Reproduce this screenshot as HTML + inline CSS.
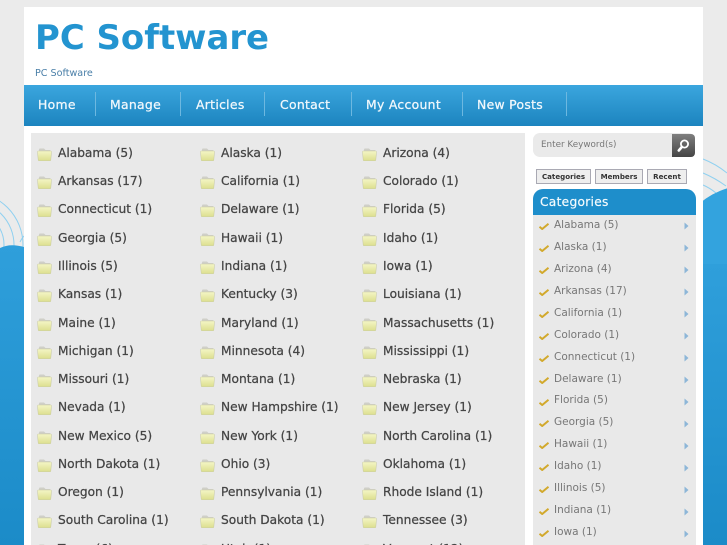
<!DOCTYPE html>
<html><head><meta charset="utf-8"><title>PC Software</title>
<style>
html,body{margin:0;padding:0;width:727px;height:545px;overflow:hidden}
#page{position:relative;width:727px;height:545px;overflow:hidden;background:#ebebeb;font-family:"DejaVu Sans",sans-serif}
.a{position:absolute;white-space:nowrap}
#wrap{left:24px;top:7px;width:679px;height:538px;background:#fff}
#nav{left:24px;top:85px;width:679px;height:41px;background:linear-gradient(#3ba6de,#1c84bf)}
#nav span{position:absolute;top:0;line-height:39px;color:#f2f8fc;font-size:12.4px;letter-spacing:.3px;-webkit-text-stroke:.25px #f2f8fc}
#nav i{position:absolute;top:7px;width:1px;height:24px;background:#6db8e0}
#main{left:31px;top:133px;width:494px;height:412px;background:#e9e9e9}
.st{position:absolute;font-size:12.2px;color:#444;line-height:16px;white-space:nowrap;-webkit-text-stroke:.25px #444}
.f{position:absolute;width:15px;height:13px}
#side{left:533px;top:189px;width:163px;height:356px;background:#e9e9e9;border-radius:10px 10px 0 0}
#sh{left:533px;top:189px;width:163px;height:26px;background:#1e8ecb;border-radius:10px 10px 0 0;color:#f4fafd;font-size:12.2px;line-height:26px;letter-spacing:.3px;text-indent:7px;-webkit-text-stroke:.2px #f4fafd}
.si{position:absolute;left:554px;font-size:10.5px;line-height:14px;color:#777;white-space:nowrap}
.ck,.ar{position:absolute}
.tab{position:absolute;top:169px;height:13px;border:1px solid #a9a9b3;background:#eee;font-size:7.1px;font-weight:bold;color:#333;text-align:center;line-height:13px}
</style></head><body><div id="page">
<svg class="a" style="left:0;top:0" width="727" height="545">
<defs>
<linearGradient id="bl" x1="0" y1="0" x2="0" y2="1"><stop offset="0" stop-color="#2f9fdb"/><stop offset="1" stop-color="#1b8bc8"/></linearGradient>
<linearGradient id="fg" x1="0" y1="0" x2="0" y2="1"><stop offset="0" stop-color="#f4f5c6"/><stop offset="1" stop-color="#dcdf8e"/></linearGradient>
<symbol id="fo" viewBox="0 0 15 13"><path d="M2 4V1.5Q2 .5 3 .5H7L8.5 2H12.5Q13.5 2 13.5 3V4Z" fill="#cfcfc8"/><path d="M0.5 3.8Q0.5 3 1.2 3H13.8Q14.5 3 14.5 3.8L13.8 12Q13.7 12.8 13 12.8H2Q1.3 12.8 1.2 12Z" fill="url(#fg)" stroke="#c8caa0" stroke-width=".5"/></symbol>
<symbol id="ch" viewBox="0 0 10 7"><path d="M.5 3.8L3.2 6L9.5 .8" fill="none" stroke="#d2a92c" stroke-width="2"/></symbol>
</defs>
<g fill="none" stroke="#8fd0f0" stroke-width="1">
<circle cx="-30" cy="245" r="34"/><circle cx="-30" cy="245" r="44"/><circle cx="-30" cy="245" r="53"/>
<path d="M20 242Q22 238 24 236"/>
<path d="M703 159Q716 164 727 173M703 173Q715 178 726 186M703 185Q710 188 716 193"/>
</g>
<path d="M0 248Q10 243 24 247V545H0Z" fill="url(#bl)"/>
<circle cx="750" cy="264" r="79" fill="#33a3de"/>
<rect x="703" y="264" width="24" height="281" fill="url(#bl)"/>
</svg>
<div class="a" id="wrap"></div>
<div class="a" style="left:35px;top:17px;font-size:33.9px;line-height:42px;font-weight:bold;color:#2394d0">PC Software</div>
<div class="a" style="left:35px;top:67px;font-size:9.6px;line-height:14px;color:#4a7fa8">PC Software</div>
<div class="a" id="nav">
<span style="left:14px">Home</span><i style="left:71px"></i>
<span style="left:86px">Manage</span><i style="left:156px"></i>
<span style="left:172px">Articles</span><i style="left:240px"></i>
<span style="left:256px">Contact</span><i style="left:327px"></i>
<span style="left:342px">My Account</span><i style="left:438px"></i>
<span style="left:453px">New Posts</span><i style="left:542px"></i>
</div>
<div class="a" id="main"></div>
<svg class="f" style="left:37px;top:148px"><use href="#fo"/></svg><div class="st" style="left:58px;top:145px">Alabama (5)</div>
<svg class="f" style="left:200px;top:148px"><use href="#fo"/></svg><div class="st" style="left:221px;top:145px">Alaska (1)</div>
<svg class="f" style="left:362px;top:148px"><use href="#fo"/></svg><div class="st" style="left:383px;top:145px">Arizona (4)</div>
<svg class="f" style="left:37px;top:176px"><use href="#fo"/></svg><div class="st" style="left:58px;top:173px">Arkansas (17)</div>
<svg class="f" style="left:200px;top:176px"><use href="#fo"/></svg><div class="st" style="left:221px;top:173px">California (1)</div>
<svg class="f" style="left:362px;top:176px"><use href="#fo"/></svg><div class="st" style="left:383px;top:173px">Colorado (1)</div>
<svg class="f" style="left:37px;top:204px"><use href="#fo"/></svg><div class="st" style="left:58px;top:201px">Connecticut (1)</div>
<svg class="f" style="left:200px;top:204px"><use href="#fo"/></svg><div class="st" style="left:221px;top:201px">Delaware (1)</div>
<svg class="f" style="left:362px;top:204px"><use href="#fo"/></svg><div class="st" style="left:383px;top:201px">Florida (5)</div>
<svg class="f" style="left:37px;top:233px"><use href="#fo"/></svg><div class="st" style="left:58px;top:230px">Georgia (5)</div>
<svg class="f" style="left:200px;top:233px"><use href="#fo"/></svg><div class="st" style="left:221px;top:230px">Hawaii (1)</div>
<svg class="f" style="left:362px;top:233px"><use href="#fo"/></svg><div class="st" style="left:383px;top:230px">Idaho (1)</div>
<svg class="f" style="left:37px;top:261px"><use href="#fo"/></svg><div class="st" style="left:58px;top:258px">Illinois (5)</div>
<svg class="f" style="left:200px;top:261px"><use href="#fo"/></svg><div class="st" style="left:221px;top:258px">Indiana (1)</div>
<svg class="f" style="left:362px;top:261px"><use href="#fo"/></svg><div class="st" style="left:383px;top:258px">Iowa (1)</div>
<svg class="f" style="left:37px;top:289px"><use href="#fo"/></svg><div class="st" style="left:58px;top:286px">Kansas (1)</div>
<svg class="f" style="left:200px;top:289px"><use href="#fo"/></svg><div class="st" style="left:221px;top:286px">Kentucky (3)</div>
<svg class="f" style="left:362px;top:289px"><use href="#fo"/></svg><div class="st" style="left:383px;top:286px">Louisiana (1)</div>
<svg class="f" style="left:37px;top:318px"><use href="#fo"/></svg><div class="st" style="left:58px;top:315px">Maine (1)</div>
<svg class="f" style="left:200px;top:318px"><use href="#fo"/></svg><div class="st" style="left:221px;top:315px">Maryland (1)</div>
<svg class="f" style="left:362px;top:318px"><use href="#fo"/></svg><div class="st" style="left:383px;top:315px">Massachusetts (1)</div>
<svg class="f" style="left:37px;top:346px"><use href="#fo"/></svg><div class="st" style="left:58px;top:343px">Michigan (1)</div>
<svg class="f" style="left:200px;top:346px"><use href="#fo"/></svg><div class="st" style="left:221px;top:343px">Minnesota (4)</div>
<svg class="f" style="left:362px;top:346px"><use href="#fo"/></svg><div class="st" style="left:383px;top:343px">Mississippi (1)</div>
<svg class="f" style="left:37px;top:374px"><use href="#fo"/></svg><div class="st" style="left:58px;top:371px">Missouri (1)</div>
<svg class="f" style="left:200px;top:374px"><use href="#fo"/></svg><div class="st" style="left:221px;top:371px">Montana (1)</div>
<svg class="f" style="left:362px;top:374px"><use href="#fo"/></svg><div class="st" style="left:383px;top:371px">Nebraska (1)</div>
<svg class="f" style="left:37px;top:402px"><use href="#fo"/></svg><div class="st" style="left:58px;top:399px">Nevada (1)</div>
<svg class="f" style="left:200px;top:402px"><use href="#fo"/></svg><div class="st" style="left:221px;top:399px">New Hampshire (1)</div>
<svg class="f" style="left:362px;top:402px"><use href="#fo"/></svg><div class="st" style="left:383px;top:399px">New Jersey (1)</div>
<svg class="f" style="left:37px;top:431px"><use href="#fo"/></svg><div class="st" style="left:58px;top:428px">New Mexico (5)</div>
<svg class="f" style="left:200px;top:431px"><use href="#fo"/></svg><div class="st" style="left:221px;top:428px">New York (1)</div>
<svg class="f" style="left:362px;top:431px"><use href="#fo"/></svg><div class="st" style="left:383px;top:428px">North Carolina (1)</div>
<svg class="f" style="left:37px;top:459px"><use href="#fo"/></svg><div class="st" style="left:58px;top:456px">North Dakota (1)</div>
<svg class="f" style="left:200px;top:459px"><use href="#fo"/></svg><div class="st" style="left:221px;top:456px">Ohio (3)</div>
<svg class="f" style="left:362px;top:459px"><use href="#fo"/></svg><div class="st" style="left:383px;top:456px">Oklahoma (1)</div>
<svg class="f" style="left:37px;top:487px"><use href="#fo"/></svg><div class="st" style="left:58px;top:484px">Oregon (1)</div>
<svg class="f" style="left:200px;top:487px"><use href="#fo"/></svg><div class="st" style="left:221px;top:484px">Pennsylvania (1)</div>
<svg class="f" style="left:362px;top:487px"><use href="#fo"/></svg><div class="st" style="left:383px;top:484px">Rhode Island (1)</div>
<svg class="f" style="left:37px;top:515px"><use href="#fo"/></svg><div class="st" style="left:58px;top:512px">South Carolina (1)</div>
<svg class="f" style="left:200px;top:515px"><use href="#fo"/></svg><div class="st" style="left:221px;top:512px">South Dakota (1)</div>
<svg class="f" style="left:362px;top:515px"><use href="#fo"/></svg><div class="st" style="left:383px;top:512px">Tennessee (3)</div>
<svg class="f" style="left:37px;top:544px"><use href="#fo"/></svg><div class="st" style="left:58px;top:541px">Texas (6)</div>
<svg class="f" style="left:200px;top:544px"><use href="#fo"/></svg><div class="st" style="left:221px;top:541px">Utah (1)</div>
<svg class="f" style="left:362px;top:544px"><use href="#fo"/></svg><div class="st" style="left:383px;top:541px">Vermont (12)</div>

<div class="a" style="left:533px;top:133px;width:162px;height:24px;background:#eaeaea;border-radius:7px"></div>
<div class="a" style="left:541px;top:138px;font-size:8.8px;line-height:14px;color:#777">Enter Keyword(s)</div>
<div class="a" style="left:672px;top:134px;width:23px;height:23px;background:linear-gradient(#7f7f7f,#444);border-radius:0 4px 4px 0"></div>
<svg class="a" style="left:672px;top:134px" width="23" height="23"><circle cx="12.5" cy="10" r="3.6" fill="none" stroke="#fff" stroke-width="1.8"/><path d="M9.8 13L6.8 16.5" stroke="#fff" stroke-width="2.6" stroke-linecap="round"/></svg>
<div class="tab" style="left:536px;width:53px">Categories</div>
<div class="tab" style="left:595px;width:46px">Members</div>
<div class="tab" style="left:647px;width:38px">Recent</div>
<div class="a" id="side"></div>
<div class="a" id="sh">Categories</div>
<svg class="ck" style="left:539px;top:223px" width="10" height="7"><use href="#ch"/></svg><div class="si" style="top:218px">Alabama (5)</div><svg class="ar" style="left:684px;top:222px" width="5" height="8"><path d="M0.5 0.5L4.5 4L0.5 7.5Z" fill="#8db6d8"/></svg>
<svg class="ck" style="left:539px;top:245px" width="10" height="7"><use href="#ch"/></svg><div class="si" style="top:240px">Alaska (1)</div><svg class="ar" style="left:684px;top:244px" width="5" height="8"><path d="M0.5 0.5L4.5 4L0.5 7.5Z" fill="#8db6d8"/></svg>
<svg class="ck" style="left:539px;top:267px" width="10" height="7"><use href="#ch"/></svg><div class="si" style="top:262px">Arizona (4)</div><svg class="ar" style="left:684px;top:266px" width="5" height="8"><path d="M0.5 0.5L4.5 4L0.5 7.5Z" fill="#8db6d8"/></svg>
<svg class="ck" style="left:539px;top:289px" width="10" height="7"><use href="#ch"/></svg><div class="si" style="top:284px">Arkansas (17)</div><svg class="ar" style="left:684px;top:288px" width="5" height="8"><path d="M0.5 0.5L4.5 4L0.5 7.5Z" fill="#8db6d8"/></svg>
<svg class="ck" style="left:539px;top:311px" width="10" height="7"><use href="#ch"/></svg><div class="si" style="top:306px">California (1)</div><svg class="ar" style="left:684px;top:310px" width="5" height="8"><path d="M0.5 0.5L4.5 4L0.5 7.5Z" fill="#8db6d8"/></svg>
<svg class="ck" style="left:539px;top:333px" width="10" height="7"><use href="#ch"/></svg><div class="si" style="top:328px">Colorado (1)</div><svg class="ar" style="left:684px;top:332px" width="5" height="8"><path d="M0.5 0.5L4.5 4L0.5 7.5Z" fill="#8db6d8"/></svg>
<svg class="ck" style="left:539px;top:355px" width="10" height="7"><use href="#ch"/></svg><div class="si" style="top:350px">Connecticut (1)</div><svg class="ar" style="left:684px;top:354px" width="5" height="8"><path d="M0.5 0.5L4.5 4L0.5 7.5Z" fill="#8db6d8"/></svg>
<svg class="ck" style="left:539px;top:377px" width="10" height="7"><use href="#ch"/></svg><div class="si" style="top:372px">Delaware (1)</div><svg class="ar" style="left:684px;top:376px" width="5" height="8"><path d="M0.5 0.5L4.5 4L0.5 7.5Z" fill="#8db6d8"/></svg>
<svg class="ck" style="left:539px;top:399px" width="10" height="7"><use href="#ch"/></svg><div class="si" style="top:393px">Florida (5)</div><svg class="ar" style="left:684px;top:398px" width="5" height="8"><path d="M0.5 0.5L4.5 4L0.5 7.5Z" fill="#8db6d8"/></svg>
<svg class="ck" style="left:539px;top:420px" width="10" height="7"><use href="#ch"/></svg><div class="si" style="top:415px">Georgia (5)</div><svg class="ar" style="left:684px;top:420px" width="5" height="8"><path d="M0.5 0.5L4.5 4L0.5 7.5Z" fill="#8db6d8"/></svg>
<svg class="ck" style="left:539px;top:442px" width="10" height="7"><use href="#ch"/></svg><div class="si" style="top:437px">Hawaii (1)</div><svg class="ar" style="left:684px;top:442px" width="5" height="8"><path d="M0.5 0.5L4.5 4L0.5 7.5Z" fill="#8db6d8"/></svg>
<svg class="ck" style="left:539px;top:464px" width="10" height="7"><use href="#ch"/></svg><div class="si" style="top:459px">Idaho (1)</div><svg class="ar" style="left:684px;top:464px" width="5" height="8"><path d="M0.5 0.5L4.5 4L0.5 7.5Z" fill="#8db6d8"/></svg>
<svg class="ck" style="left:539px;top:486px" width="10" height="7"><use href="#ch"/></svg><div class="si" style="top:481px">Illinois (5)</div><svg class="ar" style="left:684px;top:486px" width="5" height="8"><path d="M0.5 0.5L4.5 4L0.5 7.5Z" fill="#8db6d8"/></svg>
<svg class="ck" style="left:539px;top:508px" width="10" height="7"><use href="#ch"/></svg><div class="si" style="top:503px">Indiana (1)</div><svg class="ar" style="left:684px;top:508px" width="5" height="8"><path d="M0.5 0.5L4.5 4L0.5 7.5Z" fill="#8db6d8"/></svg>
<svg class="ck" style="left:539px;top:530px" width="10" height="7"><use href="#ch"/></svg><div class="si" style="top:525px">Iowa (1)</div><svg class="ar" style="left:684px;top:530px" width="5" height="8"><path d="M0.5 0.5L4.5 4L0.5 7.5Z" fill="#8db6d8"/></svg>
</div></body></html>
